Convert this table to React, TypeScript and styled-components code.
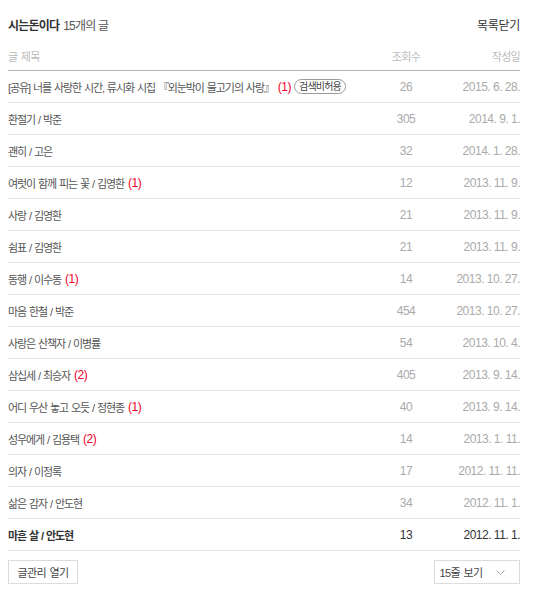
import React from 'react'
import styled, { createGlobalStyle } from 'styled-components'

const GlobalStyle = createGlobalStyle`
  body {
    margin: 0;
    background: #fff;
    font-family: 'Liberation Sans', 'Noto Sans CJK KR', sans-serif;
    color: #333;
  }
`

const Wrap = styled.div`
  width: 512px;
  padding: 15px 0 0 8px;
`

const TopBar = styled.div`
  display: flex;
  justify-content: space-between;
  align-items: center;
  height: 18px;
  font-size: 12px;
`

const BlogName = styled.span`
  font-weight: bold;
  color: #333;
  letter-spacing: -0.8px;
`

const Count = styled.span`
  margin-left: 4px;
  color: #555;
  letter-spacing: -0.8px;
`

const CloseLink = styled.span`
  color: #333;
  letter-spacing: -0.3px;
`

const Table = styled.div`
  margin-top: 13px;
`

const Row = styled.div<{ $head?: boolean }>`
  display: grid;
  grid-template-columns: minmax(0, 1fr) 60px 84px;
  align-items: center;
  height: ${p => (p.$head ? '20px' : '31px')};
  padding-bottom: ${p => (p.$head ? '4px' : '0')};
  border-bottom: 1px solid ${p => (p.$head ? '#b4b4b4' : '#e8e8e8')};
  font-size: 12px;
`

const HeadCell = styled.div<{ $align: string }>`
  color: #bbb;
  font-size: 11px;
  letter-spacing: -0.7px;
  word-spacing: 1px;
  text-align: ${p => p.$align};
`

const TitleCell = styled.div<{ $current?: boolean }>`
  display: flex;
  align-items: center;
  overflow: hidden;
  color: ${p => (p.$current ? '#333' : '#555')};
  font-weight: ${p => (p.$current ? 'bold' : 'normal')};
  font-size: 11px;
  letter-spacing: -1.1px;
  word-spacing: 1px;
  white-space: pre;
`

const Comment = styled.span`
  color: #f0002a;
  margin-left: 4px;
  font-size: 12px;
  letter-spacing: -0.5px;
`

const Badge = styled.span`
  margin-left: 3px;
  padding: 0 4px;
  border: 1px solid #999;
  border-radius: 8px;
  font-size: 10px;
  letter-spacing: -0.8px;
  line-height: 13px;
  color: #444;
`

const NumCell = styled.div<{ $current?: boolean; $align: string }>`
  color: ${p => (p.$current ? '#333' : '#aaa')};
  text-align: ${p => p.$align};
  letter-spacing: -0.5px;
`

const Footer = styled.div`
  display: flex;
  justify-content: space-between;
  margin-top: 9px;
`

const Button = styled.button<{ $width: number }>`
  display: flex;
  align-items: center;
  justify-content: center;
  gap: 13px;
  width: ${p => p.$width}px;
  height: 24px;
  padding: 0;
  border: 1px solid #dcdcdc;
  background: #fff;
  font-family: inherit;
  font-size: 11px;
  letter-spacing: -0.6px;
  word-spacing: 1px;
  color: #444;
`

const SelectButton = styled(Button)`
  padding-right: 10px;
`

type TPost = {
  title: string
  views: number
  date: string
  comments?: number
  badge?: string
  current?: boolean
}

const posts: TPost[] = [
  { title: '[공유] 너를 사랑한 시간, 류시화 시집 『외눈박이 물고기의 사랑』', views: 26, date: '2015. 6. 28.', comments: 1, badge: '검색비허용' },
  { title: '환절기 / 박준', views: 305, date: '2014. 9. 1.' },
  { title: '괜히 / 고은', views: 32, date: '2014. 1. 28.' },
  { title: '여럿이 함께 피는 꽃 / 김영환', views: 12, date: '2013. 11. 9.', comments: 1 },
  { title: '사랑 / 김영환', views: 21, date: '2013. 11. 9.' },
  { title: '쉼표 / 김영환', views: 21, date: '2013. 11. 9.' },
  { title: '동행 / 이수동', views: 14, date: '2013. 10. 27.', comments: 1 },
  { title: '마음 한철 / 박준', views: 454, date: '2013. 10. 27.' },
  { title: '사랑은 산책자 / 이병률', views: 54, date: '2013. 10. 4.' },
  { title: '삼십세 / 최승자', views: 405, date: '2013. 9. 14.', comments: 2 },
  { title: '어디 우산 놓고 오듯 / 정현종', views: 40, date: '2013. 9. 14.', comments: 1 },
  { title: '성우에게 / 김용택', views: 14, date: '2013. 1. 11.', comments: 2 },
  { title: '의자 / 이정록', views: 17, date: '2012. 11. 11.' },
  { title: '삶은 감자 / 안도현', views: 34, date: '2012. 11. 1.' },
  { title: '마흔 살 / 안도현', views: 13, date: '2012. 11. 1.', current: true },
]

const Chevron = () => (
  <svg width="9" height="5" viewBox="0 0 9 5" fill="none">
    <path d="M0.5 0.5 L4.5 4.5 L8.5 0.5" stroke="#aaa" strokeWidth="1" />
  </svg>
)

export default function App() {
  return (
    <>
      <GlobalStyle />
      <Wrap>
        <TopBar>
          <div>
            <BlogName>시는돈이다</BlogName>
            <Count>15개의 글</Count>
          </div>
          <CloseLink>목록닫기</CloseLink>
        </TopBar>
        <Table>
          <Row $head>
            <HeadCell $align="left">글 제목</HeadCell>
            <HeadCell $align="center">조회수</HeadCell>
            <HeadCell $align="right">작성일</HeadCell>
          </Row>
          {posts.map(post => (
            <Row key={post.title}>
              <TitleCell $current={post.current}>
                {post.title}
                {post.comments && <Comment>({post.comments})</Comment>}
                {post.badge && <Badge>{post.badge}</Badge>}
              </TitleCell>
              <NumCell $align="center" $current={post.current}>{post.views}</NumCell>
              <NumCell $align="right" $current={post.current}>{post.date}</NumCell>
            </Row>
          ))}
        </Table>
        <Footer>
          <Button $width={70}>글관리 열기</Button>
          <SelectButton $width={86}>
            15줄 보기
            <Chevron />
          </SelectButton>
        </Footer>
      </Wrap>
    </>
  )
}
